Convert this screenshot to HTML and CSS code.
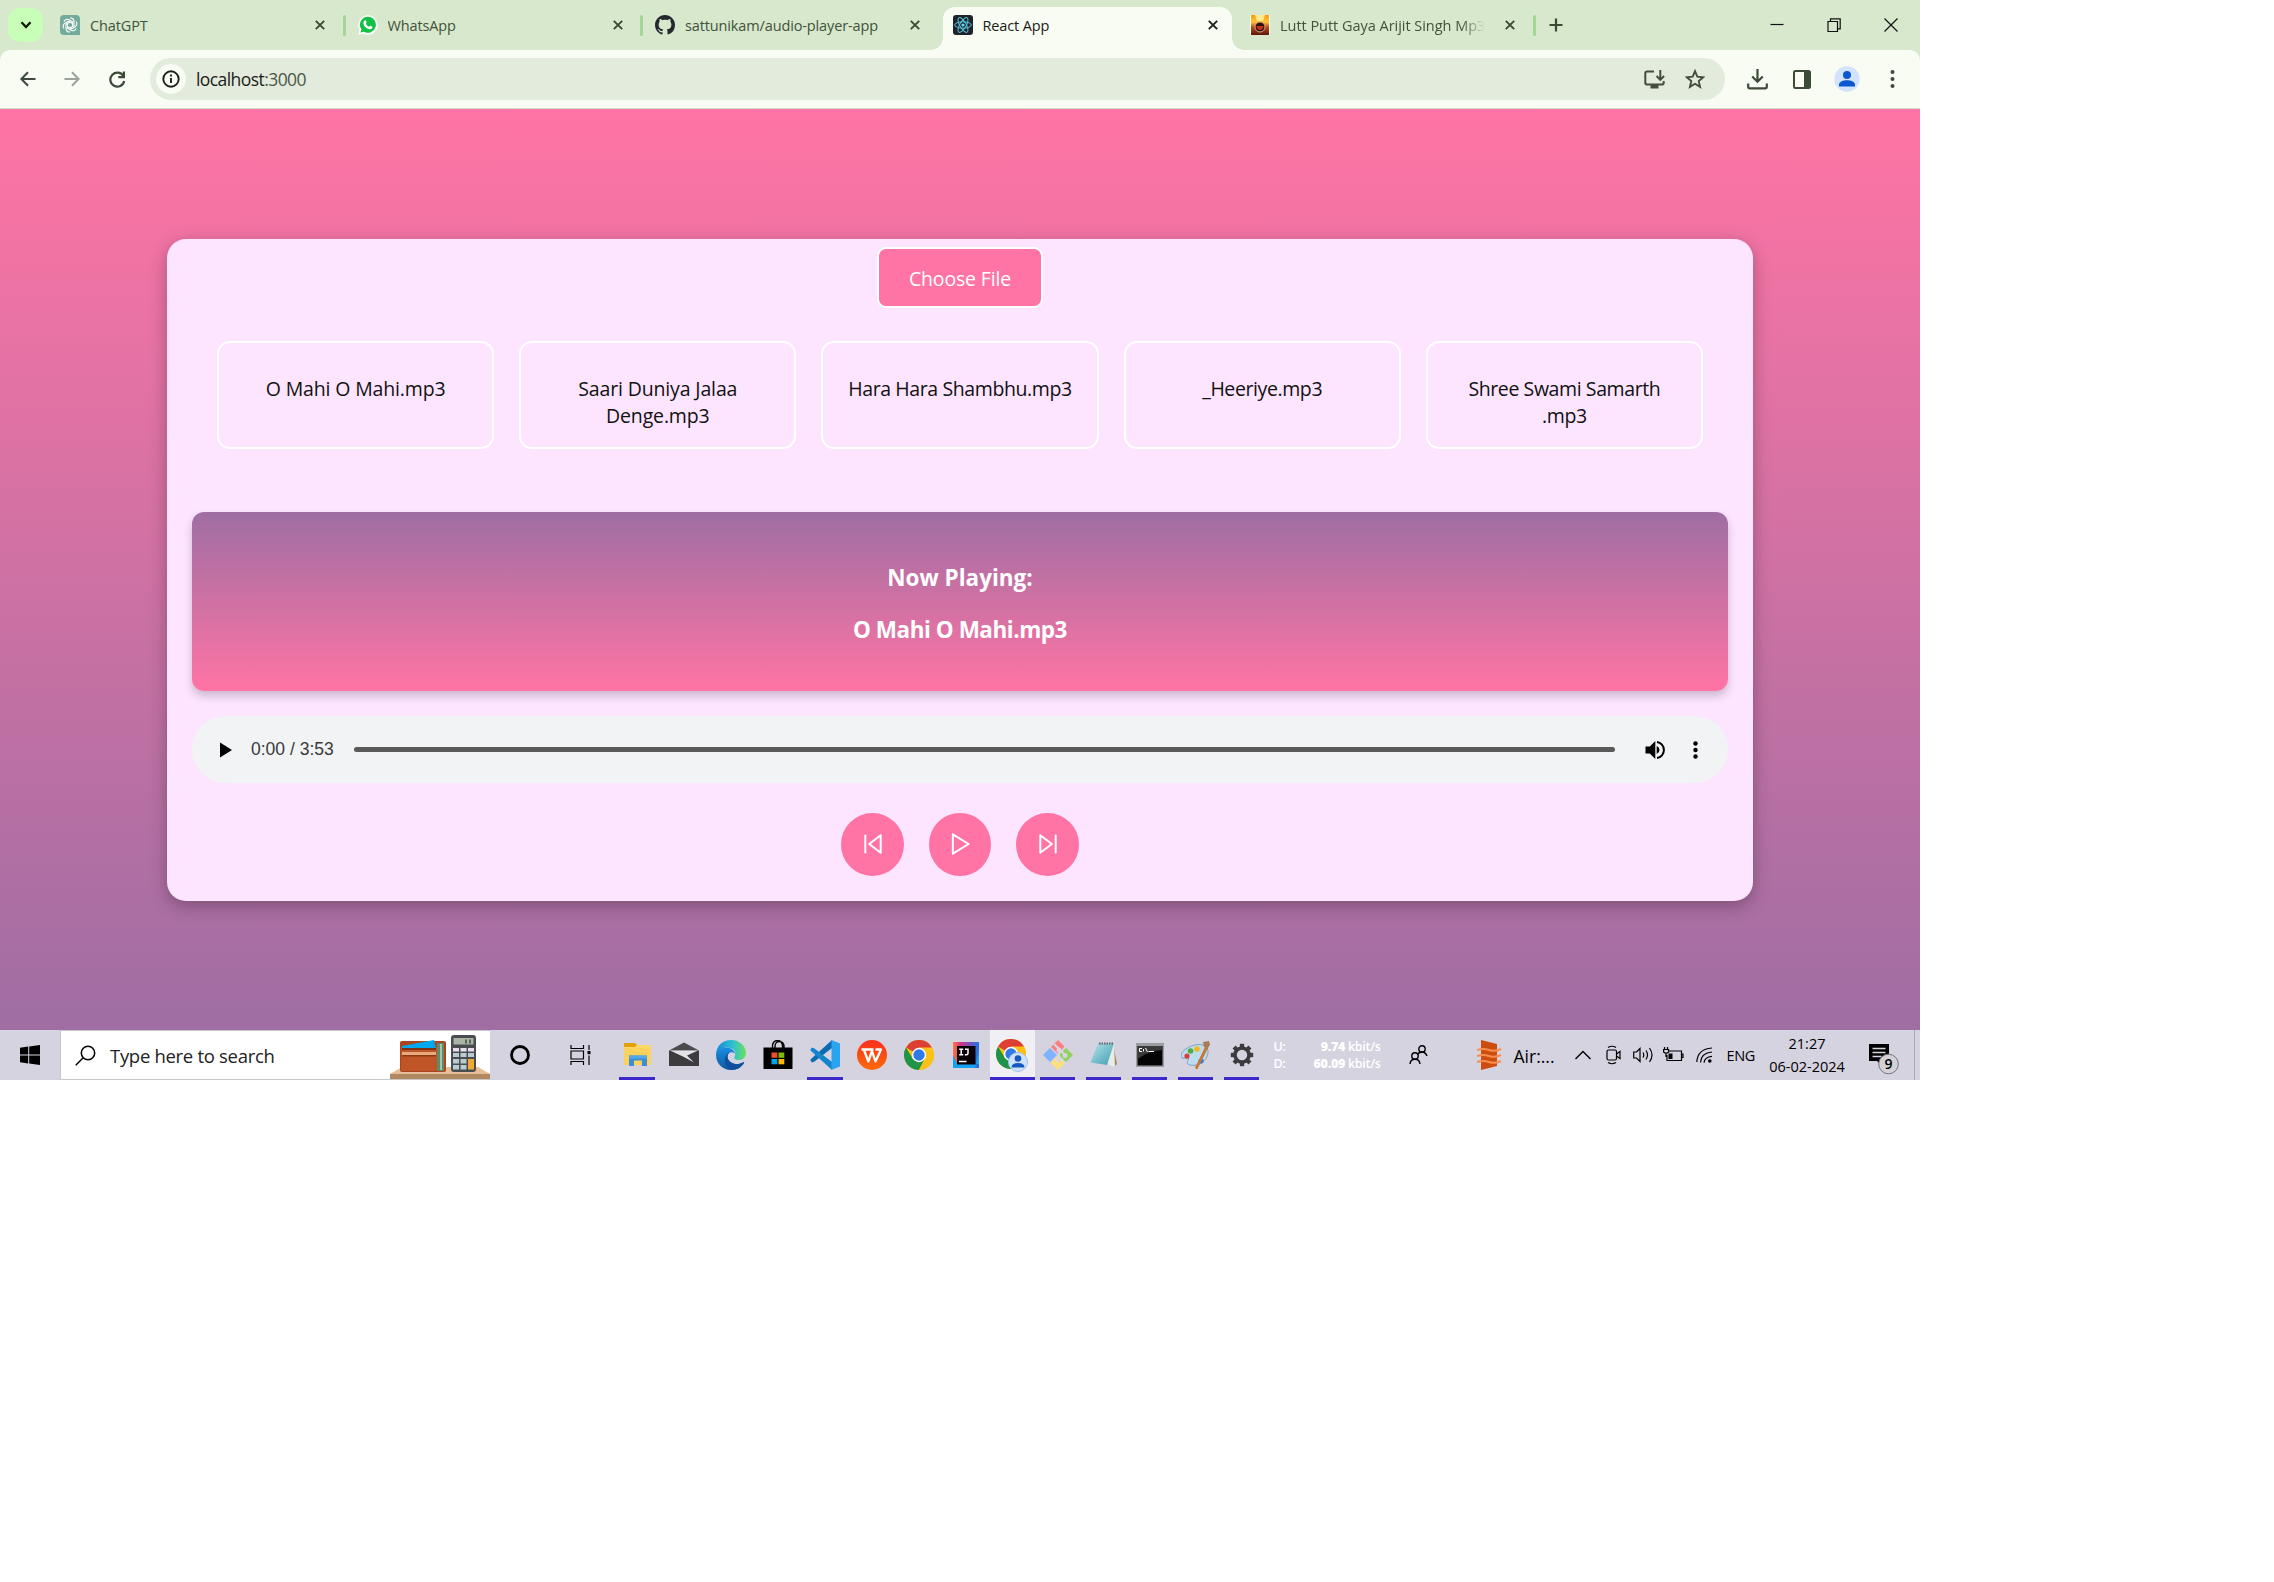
FILE: index.html
```html
<!DOCTYPE html>
<html lang="en">
<head>
<meta charset="utf-8">
<title>React App</title>
<link rel="stylesheet" href="styles.css">
</head>
<body>
<div class="screen">
  <header class="tabstrip">
    <button class="tab-search"><svg width="12" height="8" viewBox="0 0 12 8"><path d="M1.5 1.2 6 6l4.500-4.800" fill="none" stroke="#101b0b" stroke-width="2.300"/></svg></button>
    <div class="tab">
      <svg class="fav" viewBox="0 0 20 20"><path d="M4 0h12q4 0 4 4v16H4q-4 0-4-4V4q0-4 4-4z" fill="#74aa9c"/><g fill="none" stroke="#fff" stroke-width="1.100"><path id="p" d="M10 3a3.400 3.400 0 0 1 4 3.400v4.200L10 13"/><use href="#p" transform="rotate(60 10 10)"/><use href="#p" transform="rotate(120 10 10)"/><use href="#p" transform="rotate(180 10 10)"/><use href="#p" transform="rotate(240 10 10)"/><use href="#p" transform="rotate(300 10 10)"/></g></svg>
      <span class="tab-title">ChatGPT</span>
      <svg class="x" viewBox="0 0 10 10"><path d="M.8.8l8.400 8.400M9.200.8.800 9.200"/></svg>
    </div>
    <div class="tab sep">
      <svg class="fav" viewBox="0 0 20 20"><path d="M10 .2a9.800 9.800 0 1 1-4.600 18.500L.3 20l1.300-5A9.800 9.800 0 0 1 10 .2z" fill="#fff"/><path d="M10 1.800a8 8 0 1 1-4.200 14.900L2.500 17.600l.9-3.200A8 8 0 0 1 10 1.800z" fill="#12c143"/><path d="M6.400 5.600c.6-.6 1.200-.5 1.500.1l.7 1.600c.2.600-.7 1.200-.7 1.500.6 1.300 1.700 2.300 3 2.900.4.100 1-1 1.500-.9l1.700.8c.7.400.3 1.400-.1 1.900-1.400 1.300-3.600.8-5.500-.5S5.300 9.600 5.400 7.900c0-.9.400-1.700 1-2.300z" fill="#fff"/></svg>
      <span class="tab-title">WhatsApp</span>
      <svg class="x" viewBox="0 0 10 10"><path d="M.8.8l8.400 8.400M9.200.8.800 9.200"/></svg>
    </div>
    <div class="tab sep">
      <svg class="fav" viewBox="0 0 16 16"><path fill="#24292f" d="M8 0C3.580 0 0 3.580 0 8c0 3.540 2.290 6.530 5.470 7.590.4.070.55-.17.55-.38 0-.19-.01-.82-.01-1.490-2.010.37-2.530-.49-2.690-.94-.09-.23-.48-.94-.82-1.130-.28-.15-.68-.52-.01-.53.63-.01 1.080.58 1.230.82.72 1.210 1.870.87 2.330.66.070-.52.280-.87.510-1.070-1.780-.2-3.640-.89-3.640-3.950 0-.87.310-1.590.82-2.150-.08-.2-.36-1.020.08-2.120 0 0 .67-.21 2.200.82.640-.18 1.320-.27 2-.27s1.360.09 2 .27c1.530-1.040 2.200-.82 2.200-.82.44 1.100.16 1.920.08 2.120.51.56.82 1.270.82 2.150 0 3.070-1.870 3.750-3.650 3.950.29.25.54.73.54 1.480 0 1.070-.01 1.930-.01 2.200 0 .21.15.46.55.38A8.010 8.010 0 0 0 16 8c0-4.420-3.580-8-8-8z"/></svg>
      <span class="tab-title">sattunikam/audio-player-app</span>
      <svg class="x" viewBox="0 0 10 10"><path d="M.8.8l8.400 8.400M9.200.8.800 9.200"/></svg>
    </div>
    <div class="tab active">
      <svg class="fav" viewBox="0 0 20 20"><rect width="20" height="20" rx="3" fill="#20232a"/><circle cx="10" cy="10" r="1.600" fill="#61dafb"/><g fill="none" stroke="#58c4e0" stroke-width="1"><ellipse cx="10" cy="10" rx="8.300" ry="3.200"/><ellipse cx="10" cy="10" rx="8.300" ry="3.200" transform="rotate(60 10 10)"/><ellipse cx="10" cy="10" rx="8.300" ry="3.200" transform="rotate(120 10 10)"/></g></svg>
      <span class="tab-title">React App</span>
      <svg class="x" viewBox="0 0 10 10"><path d="M.8.8l8.400 8.400M9.200.8.800 9.200"/></svg>
    </div>
    <div class="tab">
      <svg class="fav" viewBox="0 0 20 20"><defs><linearGradient id="sun" x2="0" y2="1"><stop offset="0" stop-color="#f59a0c"/><stop offset=".35" stop-color="#ffc53a"/><stop offset=".6" stop-color="#b8501c"/><stop offset="1" stop-color="#5a1508"/></linearGradient></defs><path d="M0 0h20v20H0z" fill="#fff"/><path d="M1 0h18v20H1z" fill="url(#sun)"/><path d="M5 0h10l-2 6H7z" fill="#ffe98a"/><circle cx="10" cy="12" r="5" fill="#2c1010" stroke="#e9a27a"/><path d="M6.500 11h7q-.5 4-3.500 4t-3.500-4" fill="#c33018"/></svg>
      <span class="tab-title fade">Lutt Putt Gaya Arijit Singh Mp3</span>
      <svg class="x" viewBox="0 0 10 10"><path d="M.8.8l8.400 8.400M9.200.8.800 9.200"/></svg>
    </div>
    <div class="newtab sep"><svg width="14" height="14" viewBox="0 0 14 14"><path d="M7 .5v13M.5 7h13" stroke="#3a4a34" stroke-width="2.200"/></svg></div>
    <div class="winctl">
      <svg width="14" height="14" viewBox="0 0 14 14"><path d="M.5 6.500h13" /></svg>
      <svg width="14" height="14" viewBox="0 0 14 14"><path d="M1 3.500h9.500v10H1zM3.500 3V.8h9.700v10h-2.500"/></svg>
      <svg width="14" height="14" viewBox="0 0 14 14"><path d="M.5.500l13 13M13.500.500l-13 13"/></svg>
    </div>
  </header>

  <div class="toolbar-wrap">
  <nav class="toolbar">
    <div class="nav-ic"><svg width="16" height="16" viewBox="0 0 16 16"><path d="M15.500 8H1.800M8 1.300 1.400 8 8 14.700" fill="none" stroke="#3c4a37" stroke-width="2"/></svg></div>
    <div class="nav-ic"><svg width="16" height="16" viewBox="0 0 16 16"><path d="M.5 8h13.700M8 1.300 14.600 8 8 14.700" fill="none" stroke="#9ba39a" stroke-width="2"/></svg></div>
    <div class="nav-ic reload"><svg width="17" height="17" viewBox="0 0 17 17"><path d="M14.500 5.300A7 7 0 1 0 15.200 10" fill="none" stroke="#3c4a37" stroke-width="2.200"/><path d="M16 .5v6.700H9.300V5h4.500V.5z" fill="#3c4a37"/></svg></div>
    <div class="omnibox">
      <span class="info"><svg width="18" height="18" viewBox="0 0 18 18"><circle cx="9" cy="9" r="7.700" fill="none" stroke="#1c2118" stroke-width="1.900"/><path d="M9 8v5M9 4.500v1.900" stroke="#1c2118" stroke-width="1.900"/></svg></span>
      <span class="url">localhost<span class="port">:3000</span></span>
      <svg class="install" width="21" height="19" viewBox="0 0 21 19"><path d="M10 1.500H3.200Q1.300 1.500 1.300 3.300v9.400q0 1.800 1.900 1.800h14.600q1.900 0 1.900-1.800V11M16.300 0v9M12.500 6l3.800 3.800L20.100 6" fill="none" stroke="#454c42" stroke-width="2"/><path d="M6.500 15h8v3.500h-8z" fill="#454c42"/></svg>
      <svg class="star" width="20" height="20" viewBox="0 0 20 20"><path d="M10 2.200l2.300 5.500 5.900.5-4.500 3.900 1.400 5.800L10 14.800l-5.100 3.100 1.400-5.800L1.800 8.200l5.900-.5z" fill="none" stroke="#454c42" stroke-width="1.900"/></svg>
    </div>
    <svg class="dl" width="21" height="21" viewBox="0 0 21 21"><path d="M10.500 0v12.500M5.200 7.500l5.300 5.300 5.300-5.300M1.200 14.500v3.200q0 1.600 1.600 1.600h15.400q1.600 0 1.600-1.600v-3.200" fill="none" stroke="#3c4a37" stroke-width="2.200"/></svg>
    <svg class="sp" width="18" height="19" viewBox="0 0 18 19"><rect x="1" y="1" width="16" height="17" rx="1.500" fill="none" stroke="#3c4a37" stroke-width="2"/><path d="M11 1h6v17h-6z" fill="#3c4a37"/></svg>
    <svg class="av" width="26" height="26" viewBox="0 0 26 26"><circle cx="13" cy="13" r="12.700" fill="#d3e3fd"/><circle cx="13" cy="9" r="4" fill="#0b57d0"/><path d="M5 20.500v-1.800c0-3.300 4.500-4.500 8-4.500s8 1.200 8 4.500v1.800z" fill="#0b57d0"/></svg>
    <svg width="5" height="18" viewBox="0 0 5 18" fill="#3c4a37"><circle cx="2.500" cy="2" r="2"/><circle cx="2.500" cy="9" r="2"/><circle cx="2.500" cy="16" r="2"/></svg>
  </nav>
  </div>

  <main class="page">
    <section class="player">
      <button class="choose">Choose File</button>
      <ul class="songs">
        <li>O Mahi O Mahi.mp3</li>
        <li>Saari Duniya Jalaa<br>Denge.mp3</li>
        <li class="tight">Hara Hara Shambhu.mp3</li>
        <li class="tight">_Heeriye.mp3</li>
        <li class="tight">Shree Swami Samarth<br>.mp3</li>
      </ul>
      <div class="now">
        <h3>Now Playing:</h3>
        <h3 class="track-name">O Mahi O Mahi.mp3</h3>
      </div>
      <div class="audio">
        <svg width="12" height="16" viewBox="0 0 12 16"><path d="M0 .5v15L12 8z"/></svg>
        <span class="time">0:00 / 3:53</span>
        <div class="track"></div>
        <svg class="vol" width="20" height="20" viewBox="0 0 20 20"><path d="M.5 6.500h4.300L10.300 1v18L4.800 13.500H.5zM11.700 6q2.800 1.200 2.800 4t-2.800 4z"/><path d="M12 1.900a8.200 8.200 0 0 1 0 16.200" fill="none" stroke="#000" stroke-width="2"/></svg>
        <svg width="5" height="18" viewBox="0 0 5 18"><circle cx="2.500" cy="2.500" r="2.200"/><circle cx="2.500" cy="9" r="2.200"/><circle cx="2.500" cy="15.500" r="2.200"/></svg>
      </div>
      <div class="controls">
        <button><svg viewBox="0 0 20 20"><path d="M3 2.200v15.600M17 2v16L6.500 10z"/></svg></button>
        <button><svg viewBox="0 0 20 20"><path d="M3.500 1.200v17.600L17.800 10z"/></svg></button>
        <button><svg viewBox="0 0 20 20"><path d="M17 2.200v15.600M3 2v16L13.500 10z"/></svg></button>
      </div>
    </section>
  </main>

  <footer class="taskbar">
    <div class="start"><svg width="20" height="20" viewBox="0 0 20 20"><path d="M0 2.700 8.200 1.500v8H0zM9.200 1.400 20 0v9.500H9.200zM0 10.500h8.200v8L0 17.300zM9.200 10.500H20V20L9.200 18.600z"/></svg></div>
    <div class="search">
      <svg class="lens" width="21" height="21" viewBox="0 0 21 21"><circle cx="13" cy="8" r="6.700" fill="none" stroke="#000" stroke-width="1.500"/><path d="M8.200 12.800.7 20.300" stroke="#000" stroke-width="1.500"/></svg>
      <span>Type here to search</span>
      <svg class="wallet" width="100" height="45" viewBox="0 0 100 45"><path d="M0 40l12-7h76l12 7z" fill="#e8be98"/><path d="M0 40h100v5H0z" fill="#b08862"/><rect x="10" y="7" width="46" height="31" rx="2" fill="#a8451f"/><path d="M47 9h7v28h-7z" fill="#5f8a6c"/><path d="M50 10h2v26h-2z" fill="#a7c3a4"/><path d="M11 13h36v24H11z" fill="#bf5527"/><path d="M12 12l32-6 2 9H12z" fill="#00a8ee"/><path d="M12 14h34v2H12z" fill="#7d3316"/><path d="M12 18h34v4H12z" fill="#e7aa7c"/><path d="M12 21h34v1.500H12z" fill="#8d3a17"/><rect x="61" y="1" width="25" height="37" rx="3" fill="#4a4d50"/><path d="M63.500 4h20v6.500h-20z" fill="#aab5a5"/><path d="M75 5.500h2v4h-2zM79 5.500h2v4h-2z" fill="#59655a"/><g fill="#e6dff0"><path d="M63 14h6v3.500h-6zM70.500 14h6v3.500h-6zM78 14h6v3.500h-6z"/></g><g fill="#b7cbd0"><path d="M63 19h6v4h-6zM70.500 19h6v4h-6zM78 19h6v4h-6zM63 25h6v4.500h-6zM70.500 25h6v4.500h-6zM63 31h6v4.500h-6zM70.500 31h6v4.500h-6z"/></g><path d="M78 25h6v10.500h-6z" fill="#eeaa32"/></svg>
    </div>
    <div class="slot s60"><svg width="20" height="20" viewBox="0 0 20 20"><circle cx="10" cy="10" r="8.500" fill="none" stroke="#000" stroke-width="2.800"/></svg></div>
    <div class="slot s60"><svg width="21" height="20" viewBox="0 0 21 20"><path d="M1 0v3.500h12.500V0M1 20v-3.500h12.500V20M1 6h12.500v8H1zM19 0v5M19 10.500V20" fill="none" stroke="#000" stroke-width="1.200"/><path d="M17.500 6h3v3.200h-3z"/></svg></div>
    <div class="slot w47 on first"><svg width="30" height="30" viewBox="0 0 30 30"><path d="M2 3h11l2 2v4H2z" fill="#e3a008"/><path d="M2 7h11l2-2h14v20H2z" fill="#ffd766"/><path d="M2 8h27v17H2z" fill="#fdd25c"/><path d="M7 15.500h18V26h-5v-5.500h-8V26H7z" fill="#3b8fd4"/><path d="M7 15.500h18v3H7z" fill="#55a9e4"/></svg></div>
    <div class="slot w47"><svg width="30" height="30" viewBox="0 0 30 30"><path d="M0 10.500h30V26H0z" fill="#3c3c3f"/><path d="M0 10.500 15 2.500l15 8z" fill="#4b4b4e"/><path d="M1 10.500h28L18 15.500l7 7L15 17z" fill="#e4e2ea"/></svg></div>
    <div class="slot w47"><svg width="30" height="30" viewBox="0 0 30 30"><defs><linearGradient id="e1" x1="0" x2="1"><stop offset="0" stop-color="#1b88d8"/><stop offset=".55" stop-color="#2cc0d4"/><stop offset="1" stop-color="#6ae15b"/></linearGradient><linearGradient id="e2" x2="0" y2="1"><stop offset="0" stop-color="#1a8fe0"/><stop offset="1" stop-color="#0f57a5"/></linearGradient></defs><path d="M0 14C1 5 7 0 15 0c9 0 15 6.500 15 13 0 4.500-3.500 7-7.500 7-3 0-5-1.500-4-3C21 11 17 7.500 11 7.500 6 7.500 1.500 10 0 14z" fill="url(#e1)"/><path d="M0 15C0 9.500 5 7.500 10 7.500c5 0 8.500 3 9 6-1.500-1.300-4-1.600-5.500-.7-3.500 2-2.500 9.200 4.500 11 4 1 7-.3 9-1.500.8-.4 1.300.2.800 1C25 27.500 21 30 15 30 6 30 0 23 0 15z" fill="url(#e2)"/><path d="M13.500 12.800c-3.500 2-2.500 9.200 4.500 11 4 1 7-.3 9-1.500.8-.4 1.300.2.800 1C25 27.500 21 30 15 30c-7-3-9-14.500-1.500-17.200z" fill="#0f4f9c"/></svg></div>
    <div class="slot w47"><svg width="30" height="30" viewBox="0 0 30 30"><path d="M.5 7.500h29V29H.500z"/><path d="M9.500 8V5.500a5 5 0 0 1 10 0V8M12 8V6a4.500 4.500 0 0 1 9 0v2" fill="none" stroke="#000" stroke-width="1.400"/><path d="M8.500 12.500h5.800v5.300H8.500z" fill="#f25022"/><path d="M15.500 12.500h5.800v5.300h-5.800z" fill="#7fba00"/><path d="M8.500 19h5.800v5.300H8.500z" fill="#00a4ef"/><path d="M15.500 19h5.800v5.300h-5.800z" fill="#ffb900"/></svg></div>
    <div class="slot w47 on"><svg width="30" height="30" viewBox="0 0 30 30"><path d="M22 0v8L4.500 21.500 2 22.500.5 20.500v-1z" fill="#0b6bb3"/><path d="M22 30v-8L4.500 8.500 2 7.500.5 9.500v1z" fill="#1484cc"/><path d="M21.500 0 30 3.500v23L21.500 30z" fill="#2aa4ef"/></svg></div>
    <div class="slot w47"><svg width="30" height="30" viewBox="0 0 30 30"><defs><linearGradient id="w" x2="0" y2="1"><stop offset="0" stop-color="#f8301c"/><stop offset="1" stop-color="#ff6a08"/></linearGradient></defs><circle cx="15" cy="15" r="15" fill="url(#w)"/><path d="M4.500 9.500h12M7 10l4.300 11.500L15 11l3.500 10.500L24 9.500h-5.500" fill="none" stroke="#fff" stroke-width="2.300" stroke-linejoin="round"/></svg></div>
    <div class="slot w47"><svg id="chrome" width="30" height="30" viewBox="0 0 30 30"><circle cx="15" cy="15" r="15" fill="#fbc116"/><path d="M15 15 2 7.500a15 15 0 0 1 26 0z" fill="#dd3f34"/><path d="M2 7.500 9 19l6 3-4 7.500A15 15 0 0 1 2 7.500z" fill="#1f9347"/><path d="M15 22l6-3.500L15 30q-2.500 0-4.500-.8z" fill="#1f9347"/><path d="M21 18.500 15 30a15 15 0 0 0 13-22.500H15z" fill="#fbc116"/><circle cx="15" cy="15" r="7.200" fill="#fff"/><circle cx="15" cy="15" r="5.700" fill="#3079e8"/></svg></div>
    <div class="slot w47"><svg width="26" height="26" viewBox="0 0 26 26"><defs><linearGradient id="ij" x2="1"><stop offset="0" stop-color="#f97b3c"/><stop offset=".3" stop-color="#d8308a"/><stop offset="1" stop-color="#1876e8"/></linearGradient></defs><path d="M0 0h26v26H0z" fill="url(#ij)"/><path d="M0 13 6 26H0zM0 22h26v4H0zM22 26h4V8z" fill="#15a1f2"/><path d="M4 4h18.500v18.500H4z" fill="#0b0208"/><path d="M6.200 7.200h4M8.200 7.200v5.500M6.200 12.800h4M12 7.200h3v4q0 1.800-3.200 1.500M6 19.500h7.500" fill="none" stroke="#fff" stroke-width="1.500"/></svg></div>
    <div class="slot w45 on full hot"><svg width="32" height="33" viewBox="0 0 32 33"><use href="#chrome"/><circle cx="22" cy="23" r="9.500" fill="#cfe2fb" stroke="#a5c4ea"/><circle cx="22" cy="19.500" r="3.300" fill="#1458c4"/><path d="M15.500 28.500q0-4.500 6.500-4.500t6.500 4.500z" fill="#1458c4"/></svg></div>
    <div class="slot w46 on b35"><svg width="30" height="30" viewBox="0 0 30 30"><path d="M15 0l6.500 6.500L15 14 8 7z" fill="#f88080"/><path d="M23 8l7 7-7 7-7-7z" fill="#8fd35a"/><path d="M15 16l7 7-7 7-7-7z" fill="#ffe07a"/><path d="M7 8l7 7-7 7-7-7z" fill="#80b3ff"/><path d="M11 4l5 5v10M16 9l6 6" fill="none" stroke="#d8d6e2" stroke-width="2"/><circle cx="16" cy="10" r="2.500" fill="#d8d6e2"/><circle cx="22" cy="15.500" r="2.500" fill="#d8d6e2"/><circle cx="16" cy="20" r="2.500" fill="#d8d6e2"/></svg></div>
    <div class="slot w46 on b35"><svg width="30" height="30" viewBox="0 0 30 30"><defs><linearGradient id="np" x2="1" y2="1"><stop offset="0" stop-color="#b5e3ea"/><stop offset="1" stop-color="#3f9cb0"/></linearGradient></defs><path d="M24 3l4 21-3 3z" fill="#a38a55"/><path d="M10 3h15l1 24-6-2z" fill="#e5ecec"/><path d="M9 3.500h16L18 25 1.500 22.500z" fill="url(#np)"/><path d="M10 3.500h15" stroke="#5b6468" stroke-width="2" stroke-dasharray="1.500 1"/></svg></div>
    <div class="slot w46 on b35"><svg width="28" height="24" viewBox="0 0 28 24"><path d="M0 0h28v24H0z" fill="#9a9da0"/><path d="M1.500 3h25v19.500h-25z" fill="#050505"/><path d="M1.500 3h25v4Q12 8 1.500 16z" fill="#3a3a3a"/><path d="M6 5.500H3.500v3H6M7.500 6v2.500M9.500 5l2 4M12.500 8.500H18" fill="none" stroke="#fff"/></svg></div>
    <div class="slot w46 on b35"><svg width="30" height="30" viewBox="0 0 30 30"><path d="M14 5c8-2 14 2 13 8-1 8-10 14-18 12-4-1-3-4-1-6-2-2-8 1-8-3 0-5 7-9.500 14-11z" fill="#bcdcf0" stroke="#7aa3c0"/><circle cx="6" cy="16" r="2.600" fill="#d6423a"/><circle cx="9.500" cy="11" r="2.800" fill="#4caf3f"/><circle cx="16" cy="9" r="2.800" fill="#f4b71e"/><circle cx="20" cy="21" r="2.600" fill="#2f7fd6"/><path d="M25 6l2 1-11 22-1.500-1z" fill="#c9762e" stroke="#c9762e"/><path d="M22 2l6-1 1 4-3 4-3-2z" fill="#a87c54"/></svg></div>
    <div class="slot w46 on b35"><svg width="24" height="24" viewBox="0 0 24 24"><circle cx="12" cy="12" r="7" fill="none" stroke="#3b3b3e" stroke-width="3.600"/><g stroke="#3b3b3e" stroke-width="4.300"><path id="g" d="M12 4.500V.8"/><use href="#g" transform="rotate(45 12 12)"/><use href="#g" transform="rotate(90 12 12)"/><use href="#g" transform="rotate(135 12 12)"/><use href="#g" transform="rotate(180 12 12)"/><use href="#g" transform="rotate(225 12 12)"/><use href="#g" transform="rotate(270 12 12)"/><use href="#g" transform="rotate(315 12 12)"/></g></svg></div>
    <div class="net">
      <span>U:</span><span class="v"><b>9.74</b> kbit/s</span>
      <span>D:</span><span class="v"><b>60.09</b> kbit/s</span>
    </div>
    <svg class="people" width="19" height="20" viewBox="0 0 19 20" fill="none" stroke="#000" stroke-width="1.400"><circle cx="13" cy="4" r="3.200"/><path d="M8.500 10q1-3 4.500-3t5 4"/><circle cx="6" cy="11" r="3.200"/><path d="M1 19q.5-4.800 5-4.800t5 4.800"/></svg>
    <svg class="airic" width="25" height="30" viewBox="0 0 25 30"><path d="M4 0l16 4v22L4 30z" fill="#cc4d0e"/><path d="M0 10q6-2 12 0t12-1M0 16q6-2 12 0t12-1M0 22q6-2 12 0t12-1" fill="none" stroke="#f98d4e" stroke-width="2"/></svg>
    <span class="air">Air:...</span>
    <svg class="chev" width="16" height="10" viewBox="0 0 16 10"><path d="M.5 9 8 1.500 15.500 9" fill="none" stroke="#000" stroke-width="1.400"/></svg>
    <svg class="cam" width="16" height="20" viewBox="0 0 16 20" fill="none" stroke="#000" stroke-width="1.200"><rect x="1" y="5" width="9.500" height="10" rx="1.500"/><path d="M10.500 9 14 6.500v7L10.500 11M2 2.500q4-2.500 8 0M2 17.500q4 2.500 8 0"/></svg>
    <svg class="sound" width="21" height="16" viewBox="0 0 21 16" fill="none" stroke="#000" stroke-width="1.200"><path d="M.7 5h2.800L7 1.500v13L3.500 11H.7zM10 5.500q1.500 2.500 0 5M13 3.500q3 4.500 0 9M16.500 1q5 7 0 14"/></svg>
    <svg class="power" width="21" height="16" viewBox="0 0 21 16" fill="none" stroke="#000" stroke-width="1.200"><path d="M6 4h12.500v9.500H4V8M18.500 7H20v3.500h-1.500M1.500 0v2.500M4.500 0v2.500M.6 2.500h5V5Q3 7.500.6 5zM3 6.500V10"/><path d="M5.500 6.500h4V12h-4z" fill="#000" stroke="none"/></svg>
    <svg class="wifi" width="17" height="17" viewBox="0 0 17 17" fill="none" stroke="#000" stroke-width="1.200"><path d="M.8 15Q1.500 2 16 1M4.500 15.500Q5 6 16 5M8 15.800Q8.500 10 16 9.300"/><circle cx="13.800" cy="14" r="1.800" fill="#000" stroke="none"/></svg>
    <span class="eng">ENG</span>
    <div class="clock"><span>21:27</span><span>06-02-2024</span></div>
    <svg class="note" width="30" height="31" viewBox="0 0 30 31"><path d="M0 0h20v17h-8v4l-4-4H0z"/><path d="M3.500 4.500h13M3.500 8.500h13M3.500 12.500h9" stroke="#d6d3e0" stroke-width="1.400"/><circle cx="19.500" cy="20" r="9.800" fill="#d4d2d6" stroke="#77757d"/><text x="19.500" y="25" text-anchor="middle" class="badge">9</text></svg>
    <div class="peek"></div>
  </footer>
</div>
</body>
</html>
```
FILE: styles.css
```css
* { box-sizing: border-box; }
body { margin: 0; background: #fff; font-family: "Open Sans", "Noto Sans", sans-serif; color: #111; }
button { font: inherit; border: 0; padding: 0; }
svg { display: block; flex: none; }
ul { list-style: none; margin: 0; padding: 0; }
.screen { width: 1920px; height: 1080px; display: grid; grid-template-rows: 50px 59px 921px 50px; }

/* Tab strip */
.tabstrip { background: #d7e8cd; display: flex; align-items: flex-start; }
.tab-search { width: 35px; height: 34px; margin: 8px 4px 0 8px; border-radius: 12px; background: #c8ffb8; display: grid; place-items: center; }
.tab { position: relative; width: 297.5px; height: 50px; padding-left: 13px; display: flex; align-items: center; color: #42523b; font-size: 14.5px; }
.fav { width: 20px; height: 20px; margin-right: 10px; }
.tab-title { width: 205px; white-space: nowrap; overflow: hidden; letter-spacing: -0.13px; }
.fade { letter-spacing: -0.03px; mask-image: linear-gradient(to right, #000 88%, transparent); }
.x { width: 10px; height: 10px; margin-left: 20px; fill: none; stroke: #3a4a34; stroke-width: 1.9; }
.sep::before { content: ""; position: absolute; left: -2px; top: 15px; width: 3px; height: 21px; border-radius: 2px; background: #a3d796; }
.active { color: #1c2118; }
.active > * { position: relative; }
.active .x { stroke: #1c2118; }
.active::before { content: ""; position: absolute; left: 3px; right: 5px; top: 7px; bottom: 0; background: #f8fcf2; border-radius: 12px 12px 0 0; }
.active::after { content: ""; position: absolute; left: -9px; right: -7px; bottom: 0; height: 12px; background: radial-gradient(circle at 0 0, transparent 11.5px, #f8fcf2 12px) left / 12px 12px no-repeat, radial-gradient(circle at 100% 0, transparent 11.5px, #f8fcf2 12px) right / 12px 12px no-repeat; }
.newtab { position: relative; height: 50px; padding-left: 14px; display: flex; align-items: center; }
.winctl { margin: 18px 22px 0 auto; display: flex; gap: 43px; fill: none; stroke: #111; stroke-width: 1.2; }

/* Toolbar */
.toolbar-wrap { background: #d7e8cd; }
.toolbar { height: 59px; background: #f8fcf2; border-radius: 10px 10px 0 0; border-bottom: 1px solid #d5dfcf; display: flex; align-items: center; padding-left: 20px; }
.nav-ic { width: 44px; }
.nav-ic.reload { width: 42px; padding-left: 1px; }
.omnibox { width: 1575px; height: 42px; border-radius: 21px; background: #e3ebdc; display: flex; align-items: center; padding-left: 6px; }
.info { width: 30px; height: 30px; border-radius: 50%; background: #f8fcf2; display: grid; place-items: center; margin-right: 10px; }
.url { font-size: 17.5px; letter-spacing: -0.57px; color: #1c2118; }
.port { color: #4c5748; }
.install { margin-left: auto; }
.star { margin: 0 20px 0 20px; }
.dl { margin: 0 25px 0 22px; }
.sp { margin-right: 23px; }
.av { margin-right: 30px; }

/* Page */
.page { background: linear-gradient(#ff74a4, #9f6ea3); padding-top: 130px; }
.player { width: 1586px; height: 662px; margin: 0 auto; padding: 8px 25px 0; border-radius: 19px; background: #fde5ff; box-shadow: 0 5px 18px rgba(0,0,0,.28); display: flex; flex-direction: column; align-items: center; }
.choose { width: 166px; height: 61px; background: #ff74a4; border: 2px solid #fff; border-radius: 9px; color: #fff; font-size: 19.5px; letter-spacing: -0.15px; padding-top: 2px; }
.songs { width: 1486px; margin-top: 33px; display: grid; grid-template-columns: repeat(5, 1fr); gap: 25px; text-align: center; font-size: 19.5px; line-height: 27px; letter-spacing: -0.15px; }
.songs .tight { letter-spacing: -0.4px; }
.songs li { height: 108px; border: 2px solid #fff; border-radius: 13px; padding-top: 32px; }
.now { width: 1536px; height: 179px; margin-top: 63px; padding-top: 40px; border-radius: 12px; background: linear-gradient(#9f6ea3, #ff74a4); box-shadow: 0 5px 10px rgba(0,0,0,.2); color: #fff; text-align: center; }
.now h3 { margin: 0; height: 52px; line-height: 52px; font-size: 22.5px; font-weight: 700; }
.now .track-name { letter-spacing: -0.47px; }
.audio { width: 1536px; height: 67px; margin-top: 25px; border-radius: 34px; background: #f1f3f4; display: flex; align-items: center; padding-left: 28px; }
.time { width: 103px; margin-left: 19px; font: 17.5px "Liberation Sans", Arial, sans-serif; color: #3a3a3a; }
.track { width: 1261px; height: 5px; border-radius: 3px; background: #595959; }
.vol { margin: 0 28px 0 30px; }
.controls { display: flex; gap: 25px; margin-top: 30px; }
.controls button { width: 62.5px; height: 62.5px; border-radius: 50%; background: #ff74a4; display: grid; place-items: center; }
.controls svg { width: 22px; height: 22px; fill: none; stroke: #fff; stroke-width: 1.8; stroke-linejoin: round; stroke-linecap: round; }

/* Taskbar */
.taskbar { background: #d6d3e0; display: flex; align-items: center; color: #000; }
.start { width: 60px; padding-left: 20px; }
.search { width: 430px; height: 50px; background: #fff; border: 1px solid #c8c6c9; border-right: 0; display: flex; align-items: center; padding-left: 14px; font-size: 18.5px; letter-spacing: -0.3px; color: #222; }
.lens { margin-right: 14px; }
.wallet { margin: 3px 0 0 auto; }
.slot { height: 50px; display: grid; place-items: center; position: relative; }
.s60 { width: 60px; }
.first { margin-left: 3.5px; }
.w47 { width: 47px; }
.w45 { width: 45px; }
.w46 { width: 46px; }
.on::after { content: ""; position: absolute; bottom: 0; width: 36px; height: 3px; background: #3d29cb; }
.b35::after { width: 35px; }
.full::after { width: 45px; }
.hot { background: #f0eff4; }
.net { width: 107px; margin-left: 9px; display: grid; grid-template-columns: auto 1fr; color: #fff; font-size: 12.5px; line-height: 17px; font-weight: 600; letter-spacing: -0.3px; }
.v { text-align: right; }
.people { margin-left: 28px; }
.airic { margin-left: 49px; }
.air { width: 61px; padding: 2px 0 0 12px; font-size: 17.5px; }
.chev { margin-left: 12px; }
.cam { margin-left: 15px; }
.sound { margin-left: 11px; }
.power { margin-left: 9px; }
.wifi { margin-left: 12px; }
.eng { width: 44px; padding-left: 14px; font-size: 14.5px; letter-spacing: -0.3px; }
.clock { width: 76px; margin-left: 12.5px; display: flex; flex-direction: column; align-items: center; font-size: 14.5px; line-height: 23px; }
.note { margin: 9px 0 0 24px; }
.badge { font: 600 14px "Open Sans", sans-serif; }
.peek { margin-left: auto; width: 6px; height: 50px; border-left: 1px solid #aaa8b4; }
```
